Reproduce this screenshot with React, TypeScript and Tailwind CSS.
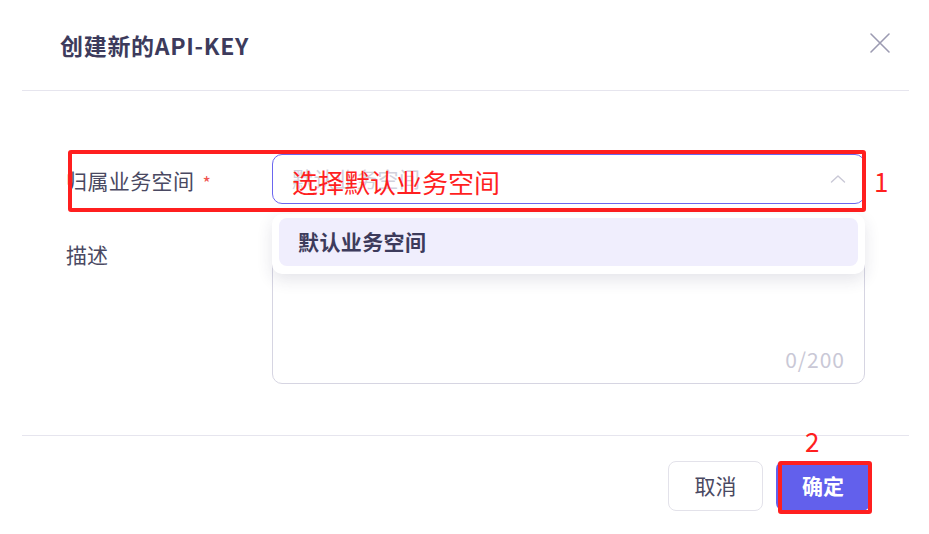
import React from 'react';

const FONT = { fontFamily: '"Noto Sans CJK SC", "Noto Sans", sans-serif' };

function CloseIcon() {
  return (
    <svg width="22" height="22" viewBox="0 0 22 22" fill="none">
      <path d="M2 2L20 20M20 2L2 20" stroke="#9c9bb2" strokeWidth="1.6" strokeLinecap="round" />
    </svg>
  );
}

function ChevronUp() {
  return (
    <svg width="16" height="10" viewBox="0 0 16 10" fill="none">
      <path d="M1.5 8L8 2L14.5 8" stroke="#c9c8d6" strokeWidth="1.4" strokeLinecap="round" strokeLinejoin="round" />
    </svg>
  );
}

export default function App() {
  return (
    <div className="relative h-[534px] w-[929px] overflow-hidden bg-white" style={FONT}>
      <div className="ml-[22px] mr-[20px]">
        {/* header */}
        <div className="flex h-[91px] items-center justify-between border-b border-[#e6e5ee] pl-[38px] pr-[18px]">
          <h1 className="text-[23px] font-bold tracking-[0.7px] text-[#3d3b5c]">创建新的API-KEY</h1>
          <button type="button" className="-mt-1">
            <CloseIcon />
          </button>
        </div>

        {/* body */}
        <div className="space-y-[15px] pb-[51px] pl-[44px] pr-[44px] pt-[63px]">
          <div className="flex items-center">
            <label className="flex w-[206px] items-center pt-[3px] text-[21px] tracking-[0.4px] text-[#4a4962]">
              归属业务空间
              <span className="ml-[8px] mt-[4px] text-[18px] text-[#f0534f]">*</span>
            </label>
            <div className="relative flex h-[50px] flex-1 items-center justify-between rounded-[10px] border border-[#6b66ef] pl-[19px] pr-[18px]">
              <span className="text-[21px] tracking-[0.4px] text-[#d2d1dc]">默认业务空间</span>
              <ChevronUp />
              <div className="absolute left-[-1px] right-[-1px] top-[59px] z-10 rounded-[10px] bg-white p-[4px_7px_8px_7px] shadow-[0_6px_16px_rgba(40,38,80,0.12)]">
                <div className="flex h-[48px] items-center rounded-[8px] bg-[#f0eefd] pl-[19px] text-[21px] font-bold tracking-[0.4px] text-[#3d3b5c]">
                  默认业务空间
                </div>
              </div>
            </div>
          </div>

          <div className="flex items-start">
            <label className="w-[206px] pt-[20px] text-[21px] text-[#4a4962]">描述</label>
            <div className="flex h-[165px] flex-1 items-end justify-end rounded-[10px] border border-[#d6d5e2] pb-[8px] pr-[19px]">
              <span className="text-[21px] tracking-[1px] text-[#c9c8d6]">0/200</span>
            </div>
          </div>
        </div>

        {/* footer */}
        <div className="flex justify-end gap-[13px] border-t border-[#e6e5ee] pr-[39px] pt-[25px]">
          <button type="button" className="h-[50px] w-[95px] rounded-[8px] border border-[#e3e2ea] bg-white text-[21px] text-[#4a4962]">
            取消
          </button>
          <button type="button" className="h-[50px] w-[94px] rounded-[8px] bg-[#6260ec] text-[21px] font-bold text-white">
            确定
          </button>
        </div>
      </div>

      {/* annotations */}
      <div className="pointer-events-none absolute left-[68px] top-[150px] h-[62px] w-[798px] rounded-[3px] border-4 border-[#ff1f1f]" />
      <div className="pointer-events-none absolute left-[292px] top-[164px] text-[26px] leading-[36px] text-[#ff1f1f]">选择默认业务空间</div>
      <div className="pointer-events-none absolute left-[874px] top-[163px] text-[26px] leading-[36px] text-[#ff1f1f]">1</div>
      <div className="pointer-events-none absolute left-[778px] top-[461px] h-[53px] w-[94px] rounded-[3px] border-4 border-[#ff1f1f]" />
      <div className="pointer-events-none absolute left-[805px] top-[423px] text-[26px] leading-[36px] text-[#ff1f1f]">2</div>
    </div>
  );
}
